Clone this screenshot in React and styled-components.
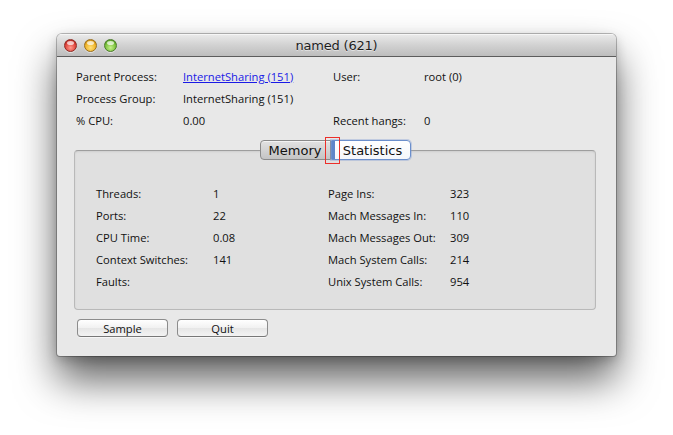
import React from 'react';
import styled, { createGlobalStyle } from 'styled-components';

const GlobalStyle = createGlobalStyle`
  html, body {
    margin: 0;
    background: #ffffff;
  }
  body {
    font-family: "Lucida Grande", "DejaVu Sans", sans-serif;
  }
`;

const Page = styled.div`
  width: 673px;
  height: 435px;
  padding: 34px 0 0 57px;
  box-sizing: border-box;
`;

const Window = styled.div`
  width: 559px;
  height: 322px;
  border-radius: 5px 5px 3px 3px;
  background: #e8e8e8;
  box-shadow: 0 0 0 1px rgba(0, 0, 0, 0.25), 0 24px 40px rgba(0, 0, 0, 0.62), 0 4px 12px rgba(0, 0, 0, 0.2);
  display: flex;
  flex-direction: column;
  overflow: hidden;
`;

const TitleBar = styled.div`
  height: 22px;
  flex: none;
  position: relative;
  display: flex;
  align-items: center;
  justify-content: center;
  background: linear-gradient(#ebebeb, #d2d2d2 50%, #bdbdbd);
  border-bottom: 1px solid #5c5c5c;
  box-shadow: inset 0 1px 0 #f6f6f6;
`;

const Lights = styled.div`
  position: absolute;
  left: 7px;
  top: 5px;
  display: flex;
  gap: 7px;
`;

const Light = styled.span`
  width: 13px;
  height: 13px;
  border-radius: 50%;
  box-sizing: border-box;
  border: 1px solid ${p => p.$edge};
  background: radial-gradient(circle at 50% 70%, ${p => p.$light} 0%, ${p => p.$color} 55%, ${p => p.$dark} 100%);
  box-shadow: 0 1px 0 rgba(255, 255, 255, 0.5);
  position: relative;
  &::after {
    content: '';
    position: absolute;
    left: 2px;
    top: 1px;
    width: 7px;
    height: 4px;
    border-radius: 50%;
    background: rgba(255, 255, 255, 0.7);
  }
`;

const Title = styled.div`
  font-family: "Lucida Grande", "DejaVu Sans", sans-serif;
  font-size: 13px;
  color: #1e1e1e;
  text-shadow: 0 1px 0 rgba(255, 255, 255, 0.5);
  letter-spacing: -0.2px;
`;

const Body = styled.div`
  flex: 1;
  padding: 8px 20px 0 17px;
  display: flex;
  flex-direction: column;
  font-family: "Open Sans", "DejaVu Sans", sans-serif;
  font-size: 11.2px;
  color: #111;
`;

const InfoGrid = styled.div`
  display: grid;
  grid-template-columns: 107px 150px 91px 1fr;
  margin-left: 2px;
  grid-auto-rows: 22px;
  align-items: center;
`;

const Cell = styled.span`
  white-space: nowrap;
`;

const LinkText = styled.a`
  color: #1a1ae6;
  text-decoration: underline;
  cursor: pointer;
`;

const TabArea = styled.div`
  position: relative;
  margin-top: 9px;
`;

const TabBox = styled.div`
  margin-top: 10px;
  height: 160px;
  box-sizing: border-box;
  border: 1px solid #b9b9b9;
  border-top-color: #9e9e9e;
  border-radius: 4px;
  background: #e0e0e0;
  box-shadow: inset 0 1px 2px rgba(0, 0, 0, 0.08);
  padding: 31px 0 0 21px;
  display: grid;
  grid-template-columns: 232px 1fr;
`;

const Tabs = styled.div`
  position: absolute;
  top: 0;
  left: 0;
  right: 0;
  display: flex;
  justify-content: center;
  z-index: 1;
`;

const Tab = styled.div`
  height: 20px;
  box-sizing: border-box;
  display: flex;
  align-items: center;
  justify-content: center;
  font-family: "Lucida Grande", "DejaVu Sans", sans-serif;
  font-size: 13px;
  color: #111;
  width: ${p => p.$w}px;
  border: 1px solid ${p => (p.$active ? '#6b8fcc' : '#8a8a8a')};
  border-radius: ${p => (p.$left ? '4px 0 0 4px' : '0 4px 4px 0')};
  background: ${p => (p.$active
    ? 'linear-gradient(#ffffff, #f4f6fb)'
    : 'linear-gradient(#e2e2e2, #c4c4c4)')};
  box-shadow: ${p => (p.$active
    ? 'inset 3px 0 0 #5f86c9, 0 0 0 1px rgba(120, 150, 210, 0.35)'
    : 'inset 0 1px 0 rgba(255,255,255,0.6)')};
  padding-left: ${p => (p.$active ? '4px' : '0')};
`;

const FocusMark = styled.div`
  position: absolute;
  z-index: 2;
  top: -3px;
  left: 251px;
  width: 15px;
  height: 27px;
  border: 1px solid #ec2f2a;
  box-sizing: border-box;
`;

const StatGrid = styled.div`
  display: grid;
  grid-template-columns: ${p => p.$label}px 1fr;
  grid-auto-rows: 22px;
  align-content: start;
  align-items: center;
`;

const Buttons = styled.div`
  display: flex;
  gap: 9px;
  margin: 9px 0 0 3px;
`;

const Button = styled.button`
  width: 91px;
  height: 18px;
  padding: 0;
  box-sizing: border-box;
  border: 1px solid #8c8c8c;
  border-bottom-color: #777;
  border-radius: 4px;
  background: linear-gradient(#ffffff, #f1f1f1 50%, #e6e6e6 51%, #f3f3f3);
  box-shadow: 0 1px 0 rgba(255, 255, 255, 0.6);
  font-family: "Open Sans", "DejaVu Sans", sans-serif;
  font-size: 11.2px;
  color: #111;
`;

const info = [
  ['Parent Process:', <LinkText key="l">InternetSharing (151)</LinkText>, 'User:', 'root (0)'],
  ['Process Group:', 'InternetSharing (151)', '', ''],
  ['% CPU:', '0.00', 'Recent hangs:', '0'],
];

const left = [
  ['Threads:', '1'],
  ['Ports:', '22'],
  ['CPU Time:', '0.08'],
  ['Context Switches:', '141'],
  ['Faults:', ''],
];

const right = [
  ['Page Ins:', '323'],
  ['Mach Messages In:', '110'],
  ['Mach Messages Out:', '309'],
  ['Mach System Calls:', '214'],
  ['Unix System Calls:', '954'],
];

export default function App() {
  return (
    <Page>
      <GlobalStyle />
      <Window>
        <TitleBar>
          <Lights>
            <Light $color="#e0443c" $light="#ff9a8c" $dark="#a01810" $edge="#8e2a24" />
            <Light $color="#f0b428" $light="#ffe07a" $dark="#b87a08" $edge="#9a6e1c" />
            <Light $color="#7cc23c" $light="#c4f08a" $dark="#3f8a14" $edge="#4a7a2a" />
          </Lights>
          <Title>named (621)</Title>
        </TitleBar>
        <Body>
          <InfoGrid>
            {info.map((row, i) => row.map((c, j) => <Cell key={`${i}-${j}`}>{c}</Cell>))}
          </InfoGrid>
          <TabArea>
            <Tabs>
              <Tab $left $w={71}>Memory</Tab>
              <Tab $active $w={80}>Statistics</Tab>
            </Tabs>
            <FocusMark />
            <TabBox>
              <StatGrid $label={117}>
                {left.map(([k, v]) => (
                  <React.Fragment key={k}>
                    <Cell>{k}</Cell>
                    <Cell>{v}</Cell>
                  </React.Fragment>
                ))}
              </StatGrid>
              <StatGrid $label={122}>
                {right.map(([k, v]) => (
                  <React.Fragment key={k}>
                    <Cell>{k}</Cell>
                    <Cell>{v}</Cell>
                  </React.Fragment>
                ))}
              </StatGrid>
            </TabBox>
          </TabArea>
          <Buttons>
            <Button>Sample</Button>
            <Button>Quit</Button>
          </Buttons>
        </Body>
      </Window>
    </Page>
  );
}
